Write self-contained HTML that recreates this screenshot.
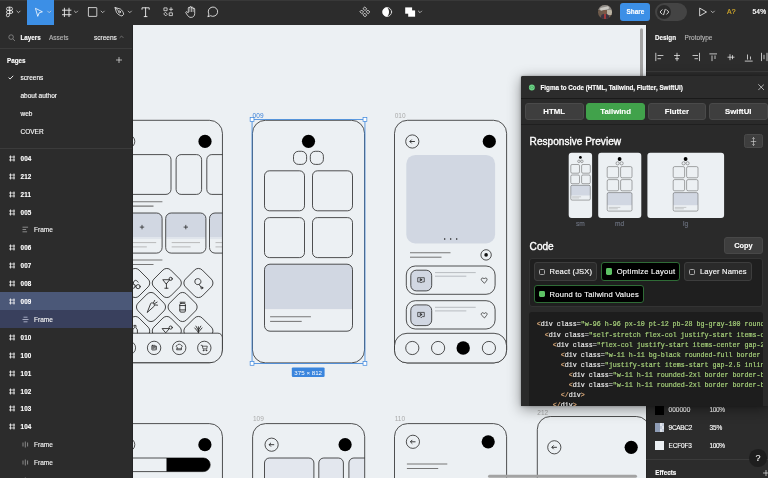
<!DOCTYPE html>
<html><head><meta charset="utf-8"><title>Figma</title>
<style>
*{box-sizing:border-box;margin:0;padding:0}
html,body{width:768px;height:478px;overflow:hidden;background:#ecf0f3;font-family:"Liberation Sans",sans-serif;}
.abs{position:absolute}
#canvas{position:absolute;left:0;top:0;width:768px;height:478px;background:#ecf0f3;overflow:hidden}
#toolbar{position:absolute;left:0;top:0;width:768px;height:25px;background:#2c2c2c}
#left{position:absolute;left:0;top:25px;width:133px;height:453px;background:#2c2c2c;color:#fff;font-size:6.5px;overflow:hidden}
#right{position:absolute;left:646px;top:25px;width:122px;height:453px;background:#2c2c2c;color:#fff;font-size:6.5px;overflow:hidden}
#plugin{position:absolute;left:521px;top:76px;width:247px;height:330px;background:#2a2a2a;color:#fff;overflow:hidden;box-shadow:0 3px 14px rgba(0,0,0,.42), 0 0 3px rgba(0,0,0,.3);border-top-left-radius:2px}
.t{position:absolute;white-space:nowrap;line-height:1;margin-top:0.5px;-webkit-text-stroke:0.12px currentColor}
.b{font-weight:bold}
#root{position:absolute;left:0;top:0;width:768px;height:478px;overflow:hidden;will-change:transform}
</style></head><body>
<div id="root">
<div id="canvas">
<svg class="abs" style="left:0;top:0" width="768" height="478" viewBox="0 0 768 478" fill="none">
<clipPath id="c008"><rect x="110.35" y="120.3" width="112.1" height="242.6" rx="13"/></clipPath>
<g clip-path="url(#c008)">
<circle cx="128.20" cy="141.40" r="6.6" fill="none" stroke="#262626" stroke-width="0.8"/>
<path d="M130.80 141.40H125.80M127.60 139.50L125.70 141.40L127.60 143.30" stroke="#262626" stroke-width="0.9" fill="none"/>
<circle cx="205.00" cy="141.40" r="6.6" fill="#000" stroke="none" stroke-width="0.8"/>
<rect x="121.80" y="154.60" width="49.20" height="39.80" rx="5" fill="none" stroke="#262626" stroke-width="0.8" />
<rect x="176.10" y="154.60" width="25.50" height="39.80" rx="5" fill="none" stroke="#262626" stroke-width="0.8" />
<rect x="206.80" y="154.60" width="49.20" height="39.80" rx="5" fill="none" stroke="#262626" stroke-width="0.8" />
<path d="M121.70 201.70H162.40" stroke="#777" stroke-width="1.05" fill="none"/>
<path d="M121.70 206.10H153.50" stroke="#777" stroke-width="1.05" fill="none"/>
<clipPath id="ca0"><rect x="121.9" y="213" width="40.2" height="40.1" rx="5.5"/></clipPath>
<rect x="121.9" y="213" width="40.2" height="24.3" fill="#d1d7e2" stroke="none" clip-path="url(#ca0)"/>
<rect x="121.9" y="237.3" width="40.2" height="1.6" fill="#dfe4eb" stroke="none" clip-path="url(#ca0)"/>
<rect x="121.90" y="213.00" width="40.20" height="40.10" rx="5.5" fill="none" stroke="#262626" stroke-width="0.8" />
<path d="M139.80 227.1h4.4M142.00 224.9v4.4" stroke="#222" stroke-width="0.75" fill="none"/>
<path d="M127.90 242.60H156.20" stroke="#a9a9a9" stroke-width="0.8" fill="none"/>
<path d="M127.90 246.90H146.80" stroke="#a9a9a9" stroke-width="0.8" fill="none"/>
<clipPath id="ca1"><rect x="165.7" y="213" width="40.2" height="40.1" rx="5.5"/></clipPath>
<rect x="165.7" y="213" width="40.2" height="24.3" fill="#d1d7e2" stroke="none" clip-path="url(#ca1)"/>
<rect x="165.7" y="237.3" width="40.2" height="1.6" fill="#dfe4eb" stroke="none" clip-path="url(#ca1)"/>
<rect x="165.70" y="213.00" width="40.20" height="40.10" rx="5.5" fill="none" stroke="#262626" stroke-width="0.8" />
<path d="M183.60 227.1h4.4M185.80 224.9v4.4" stroke="#222" stroke-width="0.75" fill="none"/>
<path d="M171.70 242.60H200.00" stroke="#a9a9a9" stroke-width="0.8" fill="none"/>
<path d="M171.70 246.90H190.60" stroke="#a9a9a9" stroke-width="0.8" fill="none"/>
<clipPath id="ca2"><rect x="209.5" y="213" width="40.2" height="40.1" rx="5.5"/></clipPath>
<rect x="209.5" y="213" width="40.2" height="24.3" fill="#d1d7e2" stroke="none" clip-path="url(#ca2)"/>
<rect x="209.5" y="237.3" width="40.2" height="1.6" fill="#dfe4eb" stroke="none" clip-path="url(#ca2)"/>
<rect x="209.50" y="213.00" width="40.20" height="40.10" rx="5.5" fill="none" stroke="#262626" stroke-width="0.8" />
<path d="M227.40 227.1h4.4M229.60 224.9v4.4" stroke="#222" stroke-width="0.75" fill="none"/>
<path d="M215.50 242.60H243.80" stroke="#a9a9a9" stroke-width="0.8" fill="none"/>
<path d="M215.50 246.90H234.40" stroke="#a9a9a9" stroke-width="0.8" fill="none"/>
<path d="M121.70 260.00H162.40" stroke="#777" stroke-width="1.05" fill="none"/>
<path d="M121.70 264.40H153.50" stroke="#777" stroke-width="1.05" fill="none"/>
<rect x="123.30" y="271.10" width="23.8" height="23.8" rx="5.5" fill="none" stroke="#262626" stroke-width="0.8" transform="rotate(45 135.20 283.00)"/>
<rect x="123.30" y="319.10" width="23.8" height="23.8" rx="5.5" fill="none" stroke="#262626" stroke-width="0.8" transform="rotate(45 135.20 331.00)"/>
<rect x="154.90" y="271.10" width="23.8" height="23.8" rx="5.5" fill="none" stroke="#262626" stroke-width="0.8" transform="rotate(45 166.80 283.00)"/>
<rect x="154.90" y="319.10" width="23.8" height="23.8" rx="5.5" fill="none" stroke="#262626" stroke-width="0.8" transform="rotate(45 166.80 331.00)"/>
<rect x="186.50" y="271.10" width="23.8" height="23.8" rx="5.5" fill="none" stroke="#262626" stroke-width="0.8" transform="rotate(45 198.40 283.00)"/>
<rect x="186.50" y="319.10" width="23.8" height="23.8" rx="5.5" fill="none" stroke="#262626" stroke-width="0.8" transform="rotate(45 198.40 331.00)"/>
<rect x="139.10" y="295.10" width="23.8" height="23.8" rx="5.5" fill="none" stroke="#262626" stroke-width="0.8" transform="rotate(45 151.00 307.00)"/>
<rect x="170.70" y="295.10" width="23.8" height="23.8" rx="5.5" fill="none" stroke="#262626" stroke-width="0.8" transform="rotate(45 182.60 307.00)"/>
<g stroke="#222" stroke-width="0.7" fill="none" stroke-linecap="round" stroke-linejoin="round" transform="translate(135.2 283) scale(1.22) translate(-135.2 -283)"><circle cx="133.6" cy="285.6" r="1.7"/><circle cx="137.6" cy="286" r="1.7"/><path d="M133.6 283.900c0-3 2-4.500 4-1.600"/></g>
<g stroke="#222" stroke-width="0.7" fill="none" stroke-linecap="round" stroke-linejoin="round" transform="translate(166.8 283) scale(1.22) translate(-166.8 -283)"><path d="M163.800 280.300h5.400l-2.700 3.300zM166.500 283.600v3.600M165.200 287.300h2.600"/><circle cx="170" cy="279.600" r="1.300"/></g>
<g stroke="#222" stroke-width="0.7" fill="none" stroke-linecap="round" stroke-linejoin="round" transform="translate(198.4 283) scale(1.22) translate(-198.4 -283)"><path d="M196 280.200c1.400-1.400 3.600-1 4.300.8.600 1.500-.2 2.800-1.500 3.100l1.900 2.400"/><path d="M196 280.200c-1 1.300-.6 3.100.7 3.800 1 .5 1.700.3 2.100.1"/><circle cx="201.200" cy="287" r="0.800"/></g>
<g stroke="#222" stroke-width="0.7" fill="none" stroke-linecap="round" stroke-linejoin="round" transform="translate(151 307) scale(1.22) translate(-151 -307)"><path d="M148 311.200l2.800-7.200c1.200-1 3.200.1 3 1.900z"/><path d="M153 303.600l1-2M153.800 304.300l2.200-1.300M154.200 305.300l2.200.2"/></g>
<g stroke="#222" stroke-width="0.7" fill="none" stroke-linecap="round" stroke-linejoin="round" transform="translate(182.6 307) scale(1.22) translate(-182.6 -307)"><rect x="180.300" y="304" width="4.600" height="7.200" rx="1"/><path d="M180.600 303.100h4M180.300 305.800h4.600M180.300 309.400h4.600"/></g>
<g stroke="#222" stroke-width="0.7" fill="none" stroke-linecap="round" stroke-linejoin="round" transform="translate(135.2 331) scale(1.22) translate(-135.2 -331)"><path d="M134.400 326.400h1.400v2l1.200 1.600v4h-3.800v-4l1.200-1.600z"/></g>
<g stroke="#222" stroke-width="0.7" fill="none" stroke-linecap="round" stroke-linejoin="round" transform="translate(166.8 331) scale(1.22) translate(-166.8 -331)"><path d="M163.300 329h5.600l-2.800 3.300z"/><circle cx="170" cy="328.200" r="1.300"/></g>
<g stroke="#222" stroke-width="0.7" fill="none" stroke-linecap="round" stroke-linejoin="round" transform="translate(198.4 331) scale(1.22) translate(-198.4 -331)"><path d="M198.400 333v-5.500M198.400 332l-3-3.500M198.400 332l3-3.500M198.400 330.500l-2-3.500M198.400 330.500l2-3.500"/></g>
<path d="M110.35 333.200H217.95a4.500 4.500 0 0 1 4.500 4.500V362.9H110.35z" fill="#ecf0f3" stroke="#262626" stroke-width="0.8"/>
<circle cx="128.90" cy="347.90" r="6.7" fill="none" stroke="#262626" stroke-width="0.8"/>
<circle cx="154.10" cy="347.90" r="6.7" fill="none" stroke="#262626" stroke-width="0.8"/>
<circle cx="179.20" cy="347.90" r="6.7" fill="none" stroke="#262626" stroke-width="0.8"/>
<circle cx="204.30" cy="347.90" r="6.7" fill="none" stroke="#262626" stroke-width="0.8"/>
<g stroke="#222" stroke-width="0.7" fill="none" stroke-linecap="round" stroke-linejoin="round" stroke-width="0.55"><rect x="151.800" y="345.400" width="3.400" height="4.600" rx="0.500"/><path d="M152.600 346.600h1.800M152.600 347.700h1.800M152.600 348.800h1.200M155.200 346.200h1.300v3.200c0 .4-.3.600-.7.600"/></g>
<g stroke="#222" stroke-width="0.7" fill="none" stroke-linecap="round" stroke-linejoin="round" stroke-width="0.55"><path d="M177 347.300c-1.300-.300-1.200-2.100.3-2 .4-1.500 3.400-1.500 3.800 0 1.500-.1 1.600 1.700.3 2v2.500h-4.400z"/><path d="M177 348.800h4.400"/></g>
<g stroke="#222" stroke-width="0.7" fill="none" stroke-linecap="round" stroke-linejoin="round" stroke-width="0.55"><path d="M201.200 345.300h1l.8 3.600h3.700l.6-2.700h-4.700"/><circle cx="203.500" cy="350.300" r="0.500"/><circle cx="206.300" cy="350.300" r="0.500"/></g>
</g>
<rect x="110.35" y="120.30" width="112.10" height="242.60" rx="13" fill="none" stroke="#262626" stroke-width="0.8" />
<text x="252.4" y="117.9" font-family="Liberation Sans, sans-serif" font-size="6.5" letter-spacing="0.2" fill="#3b80d8" stroke="none">009</text>
<rect x="252.45" y="120.30" width="112.10" height="242.60" rx="13" fill="none" stroke="#262626" stroke-width="0.8" />
<circle cx="308.50" cy="141.30" r="6.6" fill="#000" stroke="none" stroke-width="0.8"/>
<rect x="293.50" y="151.30" width="13.10" height="13.10" rx="5.0" fill="none" stroke="#262626" stroke-width="0.8" />
<rect x="310.30" y="151.30" width="13.10" height="13.10" rx="5.0" fill="none" stroke="#262626" stroke-width="0.8" />
<rect x="264.50" y="170.80" width="40.00" height="40.00" rx="5" fill="none" stroke="#262626" stroke-width="0.8" />
<rect x="312.50" y="170.80" width="40.00" height="40.00" rx="5" fill="none" stroke="#262626" stroke-width="0.8" />
<rect x="264.50" y="217.60" width="40.00" height="40.00" rx="5" fill="none" stroke="#262626" stroke-width="0.8" />
<rect x="312.50" y="217.60" width="40.00" height="40.00" rx="5" fill="none" stroke="#262626" stroke-width="0.8" />
<clipPath id="c9"><rect x="264.5" y="264.2" width="88" height="67" rx="5.5"/></clipPath>
<rect x="264.500" y="264.200" width="88" height="44.900" fill="#d1d7e2" stroke="none" clip-path="url(#c9)"/>
<rect x="264.50" y="264.20" width="88.00" height="67.00" rx="5.5" fill="none" stroke="#262626" stroke-width="0.8" />
<path d="M270.10 316.70H310.90" stroke="#777" stroke-width="1.05" fill="none"/>
<path d="M270.10 321.40H301.70" stroke="#777" stroke-width="1.05" fill="none"/>
<rect x="252.05" y="119.5" width="112.9" height="243.9" fill="none" stroke="#3a85dd" stroke-width="0.8"/>
<rect x="250.15" y="117.60" width="3.800" height="3.800" fill="#fff" stroke="#3a85dd" stroke-width="0.7"/>
<rect x="363.05" y="117.60" width="3.800" height="3.800" fill="#fff" stroke="#3a85dd" stroke-width="0.7"/>
<rect x="250.15" y="361.50" width="3.800" height="3.800" fill="#fff" stroke="#3a85dd" stroke-width="0.7"/>
<rect x="363.05" y="361.50" width="3.800" height="3.800" fill="#fff" stroke="#3a85dd" stroke-width="0.7"/>
<rect x="291.800" y="367.400" width="32.800" height="9.600" rx="1.200" fill="#3a85dd" stroke="none"/>
<text x="308.200" y="374.500" text-anchor="middle" font-family="Liberation Sans, sans-serif" font-size="6.200" fill="#fff" stroke="none">375 × 812</text>
<text x="394.7" y="118.0" font-family="Liberation Sans, sans-serif" font-size="6.5" letter-spacing="0" fill="#aaaaaa" stroke="none">010</text>
<rect x="394.50" y="120.30" width="112.10" height="242.60" rx="13" fill="none" stroke="#262626" stroke-width="0.8" />
<circle cx="412.30" cy="141.50" r="6.6" fill="none" stroke="#262626" stroke-width="0.8"/>
<path d="M414.90 141.50H409.90M411.70 139.60L409.80 141.50L411.70 143.40" stroke="#262626" stroke-width="0.9" fill="none"/>
<circle cx="489.30" cy="141.40" r="6.6" fill="#000" stroke="none" stroke-width="0.8"/>
<rect x="406.30" y="154.90" width="88.80" height="88.50" rx="9" fill="#d1d7e2" stroke="none" stroke-width="0.8" />
<circle cx="444.70" cy="239.10" r="0.75" fill="#111" stroke="none" stroke-width="0.8"/>
<circle cx="450.70" cy="239.10" r="0.75" fill="#111" stroke="none" stroke-width="0.8"/>
<circle cx="456.70" cy="239.10" r="0.75" fill="#111" stroke="none" stroke-width="0.8"/>
<path d="M410.00 252.70H450.50" stroke="#777" stroke-width="1.05" fill="none"/>
<path d="M410.00 257.20H441.50" stroke="#777" stroke-width="1.05" fill="none"/>
<circle cx="486.10" cy="254.90" r="5.2" fill="none" stroke="#262626" stroke-width="0.8"/>
<circle cx="486.10" cy="254.90" r="1.8" fill="#111" stroke="none" stroke-width="0.8"/>
<rect x="406.30" y="266.00" width="88.80" height="28.30" rx="9" fill="none" stroke="#262626" stroke-width="0.8" />
<rect x="410.80" y="270.20" width="20.90" height="20.70" rx="5.5" fill="#d1d7e2" stroke="#262626" stroke-width="0.8" />
<g stroke="#222" stroke-width="0.7" fill="none" stroke-linecap="round" stroke-linejoin="round" stroke-width="0.55"><path d="M418.09999999999997 277.7h6.200v4.200h-2l-1.100 1.100-1.100-1.100h-2z"/><path d="M420.5 278.8l1.700 1-1.700 1z" fill="#222"/></g>
<path d="M435.00 272.60H475.70" stroke="#a9adb3" stroke-width="0.8" fill="none"/>
<path d="M435.00 276.20H466.30" stroke="#a9adb3" stroke-width="0.8" fill="none"/>
<path d="M484.2 283.0l-2.500-2.400c-1-1 -.3-2.600 1-2.600 .7 0 1.200 .4 1.500 1 .3-.6 .8-1 1.500-1 1.300 0 2 1.600 1 2.600z" stroke="#222" stroke-width="0.7" fill="none" stroke-linecap="round" stroke-linejoin="round" stroke-width="0.600"/>
<rect x="406.30" y="300.70" width="88.80" height="28.30" rx="9" fill="none" stroke="#262626" stroke-width="0.8" />
<rect x="410.80" y="304.90" width="20.90" height="20.70" rx="5.5" fill="#d1d7e2" stroke="#262626" stroke-width="0.8" />
<g stroke="#222" stroke-width="0.7" fill="none" stroke-linecap="round" stroke-linejoin="round" stroke-width="0.55"><path d="M418.09999999999997 312.4h6.200v4.200h-2l-1.100 1.100-1.100-1.100h-2z"/><path d="M420.5 313.5l1.700 1-1.700 1z" fill="#222"/></g>
<path d="M435.00 307.30H475.70" stroke="#a9adb3" stroke-width="0.8" fill="none"/>
<path d="M435.00 310.90H466.30" stroke="#a9adb3" stroke-width="0.8" fill="none"/>
<path d="M484.2 317.7l-2.500-2.400c-1-1 -.3-2.600 1-2.600 .7 0 1.200 .4 1.500 1 .3-.6 .8-1 1.500-1 1.300 0 2 1.600 1 2.600z" stroke="#222" stroke-width="0.7" fill="none" stroke-linecap="round" stroke-linejoin="round" stroke-width="0.600"/>
<rect x="394.50" y="333.30" width="112.10" height="29.60" rx="12.5" fill="#ecf0f3" stroke="#262626" stroke-width="0.8" />
<circle cx="412.30" cy="348.00" r="6.6" fill="none" stroke="#262626" stroke-width="0.8"/>
<circle cx="438.10" cy="348.00" r="6.6" fill="none" stroke="#262626" stroke-width="0.8"/>
<circle cx="463.20" cy="348.00" r="6.7" fill="#000" stroke="none" stroke-width="0.8"/>
<circle cx="488.90" cy="348.00" r="6.6" fill="none" stroke="#262626" stroke-width="0.8"/>
<clipPath id="cb1"><rect x="110.35" y="423.6" width="112.1" height="242.6" rx="13"/></clipPath>
<g clip-path="url(#cb1)">
<circle cx="128.20" cy="444.70" r="6.6" fill="none" stroke="#262626" stroke-width="0.8"/>
<path d="M130.80 444.70H125.80M127.60 442.80L125.70 444.70L127.60 446.60" stroke="#262626" stroke-width="0.9" fill="none"/>
<circle cx="204.90" cy="444.70" r="6.6" fill="#000" stroke="none" stroke-width="0.8"/>
<rect x="121.70" y="458.00" width="88.50" height="13.60" rx="6.8" fill="none" stroke="#262626" stroke-width="0.8" />
<path d="M166.500 458h36.900a6.800 6.800 0 0 1 0 13.600h-36.900z" fill="#000" stroke="none"/>
</g>
<rect x="110.35" y="423.60" width="112.10" height="242.60" rx="13" fill="none" stroke="#262626" stroke-width="0.8" />
<text x="253" y="421.2" font-family="Liberation Sans, sans-serif" font-size="6.5" letter-spacing="0" fill="#aaaaaa" stroke="none">109</text>
<clipPath id="cb2"><rect x="252.6" y="423.6" width="112.1" height="242.6" rx="13"/></clipPath>
<g clip-path="url(#cb2)">
<circle cx="271.60" cy="444.70" r="6.6" fill="none" stroke="#262626" stroke-width="0.8"/>
<path d="M274.20 444.70H269.20M271.00 442.80L269.10 444.70L271.00 446.60" stroke="#262626" stroke-width="0.9" fill="none"/>
<circle cx="345.10" cy="444.70" r="6.6" fill="#000" stroke="none" stroke-width="0.8"/>
<rect x="264.50" y="458.00" width="49.40" height="40.00" rx="5" fill="#e3e7ee" stroke="#262626" stroke-width="0.8" />
<rect x="318.80" y="458.00" width="24.60" height="40.00" rx="5" fill="#e3e7ee" stroke="#262626" stroke-width="0.8" />
<rect x="348.90" y="458.00" width="49.40" height="40.00" rx="5" fill="#e3e7ee" stroke="#262626" stroke-width="0.8" />
</g>
<rect x="252.60" y="423.60" width="112.10" height="242.60" rx="13" fill="none" stroke="#262626" stroke-width="0.8" />
<text x="394.7" y="421.2" font-family="Liberation Sans, sans-serif" font-size="6.5" letter-spacing="0" fill="#aaaaaa" stroke="none">110</text>
<rect x="394.50" y="423.60" width="112.10" height="242.60" rx="13" fill="none" stroke="#262626" stroke-width="0.8" />
<circle cx="412.90" cy="441.80" r="6.6" fill="none" stroke="#262626" stroke-width="0.8"/>
<path d="M415.50 441.80H410.50M412.30 439.90L410.40 441.80L412.30 443.70" stroke="#262626" stroke-width="0.9" fill="none"/>
<circle cx="488.20" cy="441.80" r="6.6" fill="#000" stroke="none" stroke-width="0.8"/>
<path d="M406.90 463.90H447.30" stroke="#777" stroke-width="1.05" fill="none"/>
<path d="M406.90 468.50H438.20" stroke="#777" stroke-width="1.05" fill="none"/>
<text x="537.3" y="415.0" font-family="Liberation Sans, sans-serif" font-size="6.5" letter-spacing="0" fill="#aaaaaa" stroke="none">212</text>
<rect x="537.30" y="416.50" width="112.10" height="242.60" rx="13" fill="none" stroke="#262626" stroke-width="0.8" />
<circle cx="554.30" cy="447.30" r="6.6" fill="none" stroke="#262626" stroke-width="0.8"/>
<path d="M556.90 447.30H551.90M553.70 445.40L551.80 447.30L553.70 449.20" stroke="#262626" stroke-width="0.9" fill="none"/>
<circle cx="631.20" cy="447.30" r="6.6" fill="#000" stroke="none" stroke-width="0.8"/>
<rect x="640" y="28.300" width="3" height="200" rx="1.500" fill="#a3a3a3" stroke="none"/>
<rect x="488" y="474.800" width="149" height="3" rx="1.500" fill="#a3a3a3" stroke="none"/>
</svg>
</div>
<div id="toolbar">
<div class="abs" style="left:0;top:0;width:768px;height:1px;background:#383838"></div>
<div class="abs" style="left:27px;top:0;width:27px;height:25px;background:#3c8fe6"></div>
<svg class="abs" style="left:0;top:0" width="768" height="25" viewBox="0 0 768 25" fill="none" stroke="#f0f0f0" stroke-width="0.8" stroke-linecap="round" stroke-linejoin="round">
<!-- figma logo -->
<g stroke-width="0.75">
<path d="M9.5 7.2H8.1a1.6 1.6 0 0 0 0 3.2h1.4zM9.5 7.2h1.4a1.6 1.6 0 0 1 0 3.2H9.5z"/>
<path d="M9.5 10.4H8.1a1.6 1.6 0 0 0 0 3.2h1.4z"/>
<circle cx="11" cy="12" r="1.6"/>
<path d="M9.5 13.6H8.1a1.6 1.6 0 1 0 1.4 1.6z"/>
</g>
<g stroke="#d8d8d8" stroke-width="0.75">
<path d="M16.9 11.1l1.6 1.6 1.6-1.6"/>
<path d="M47.6 11.1l1.6 1.6 1.6-1.6"/>
<path d="M74.4 11.1l1.6 1.6 1.6-1.6"/>
<path d="M101.1 11.1l1.6 1.6 1.6-1.6"/>
<path d="M128.2 11.1l1.6 1.6 1.6-1.6"/>
<path d="M418.4 11.1l1.6 1.6 1.6-1.6"/>
<path d="M711.2 11.1l1.6 1.6 1.6-1.6"/>
</g>
<!-- move -->
<path d="M35.8 8.5l6.6 3.3-3.2 1-1.3 3.2z" stroke="#fff"/>
<!-- frame -->
<path d="M64.4 8.2v8.4M69 8.2v8.4M62.4 10.2h8.6M62.4 14.7h8.6" stroke-width="0.9"/>
<!-- rect -->
<rect x="88.4" y="7.6" width="8.4" height="8.8" rx="0.4"/>
<!-- pen -->
<path d="M115.3 7.6l5.2 1.5c1.6 1.2 2.8 3 3.2 5.2l-1.7 1.7c-2.2-.4-4-1.600-5.200-3.200z"/>
<path d="M115.3 7.600l3.500 3.600"/>
<circle cx="119.500" cy="11.900" r="1"/>
<!-- T -->
<path d="M142 9.300V7.800h7.200v1.500M145.600 7.800v8.800M144.200 16.600h2.800" stroke-width="0.9"/>
<!-- resources -->
<g stroke-width="0.75">
<rect x="164.300" y="7.900" width="2.800" height="2.800"/>
<path d="M171 7.600v3.400M169.300 9.300h3.400"/>
<path d="M165.700 12.500l1.700 1.700-1.700 1.700-1.700-1.700z"/>
<rect x="169.600" y="12.800" width="2.800" height="2.800"/>
</g>
<!-- hand -->
<path d="M188.300 12.300V8.100a.8.800 0 0 1 1.600 0V7.300a.8.800 0 0 1 1.600 0v.7a.8.800 0 0 1 1.600 0v1a.8.800 0 0 1 1.600 0v4.600c0 2.200-1.400 3.800-3.600 3.800-1.600 0-2.600-.6-3.600-2.100l-1.700-2.600c-.4-.7.500-1.500 1.200-.8z"/>
<path d="M189.900 8v3.600M191.500 8v3.600M193.100 9v2.600" stroke-width="0.6"/>
<!-- comment -->
<path d="M208 16.400l.9-2.300a4.700 4.700 0 1 1 1.900 1.800z" stroke-width="0.85"/>
<!-- component -->
<g stroke-width="0.75" stroke="#fff">
<path d="M365 7.200l1.700 1.700-1.700 1.700-1.700-1.700z"/>
<path d="M365 13.400l1.700 1.700-1.700 1.700-1.700-1.700z"/>
<path d="M361.900 10.300l1.700 1.700-1.700 1.700-1.700-1.700z"/>
<path d="M368.100 10.300l1.700 1.700-1.700 1.700-1.700-1.700z"/>
</g>
<!-- mask -->
<circle cx="387.100" cy="12" r="4.500" stroke-width="0.800"/>
<path d="M387.100 7.500a4.500 4.500 0 0 0 0 9c1.500-1.200 1.900-3 1.900-4.500s-.4-3.300-1.900-4.500z" fill="#fff" stroke="none"/>
<!-- boolean -->
<rect x="405.200" y="7.400" width="6.900" height="6.300" fill="#fff" stroke="none"/>
<rect x="408.200" y="10.400" width="6.900" height="6.300" fill="#fff" stroke="none"/>
<!-- play -->
<path d="M700 8.300l6.500 3.700-6.500 3.700z" stroke-width="0.85"/>
</svg>
<!-- avatar -->
<div class="abs" style="left:598.200px;top:5.300px;width:13.600px;height:13.600px;border-radius:50%;overflow:hidden;background:#6d5a4b">
<div class="abs" style="left:0;top:0;width:14px;height:5px;background:#8d8a86"></div>
<div class="abs" style="left:2px;top:1.500px;width:9px;height:3px;background:#c9c7c2;border-radius:2px;transform:rotate(-12deg)"></div>
<div class="abs" style="left:9px;top:5px;width:5px;height:5px;background:#b9b2a2"></div>
<div class="abs" style="left:4.500px;top:4.500px;width:4.500px;height:4.500px;border-radius:50%;background:#7a5a48"></div>
<div class="abs" style="left:2.500px;top:9px;width:8.500px;height:6px;border-radius:3px 3px 0 0;background:#3b3442"></div>
<div class="abs" style="left:5.800px;top:9px;width:1.600px;height:5px;background:#a23a3a"></div>
</div>
<!-- share -->
<div class="abs" style="left:620px;top:3px;width:30.200px;height:18.200px;border-radius:3px;background:#3c8fe6"></div>
<span class="t b" style="left:626.600px;top:8.800px;font-size:6.400px;color:#fff">Share</span>
<!-- dev toggle -->
<div class="abs" style="left:654.800px;top:3px;width:31.800px;height:18px;border-radius:9px;background:#444"></div>
<div class="abs" style="left:657px;top:5px;width:14.400px;height:14.400px;border-radius:50%;background:#2a2a2a"></div>
<svg class="abs" style="left:659px;top:8px" width="11" height="8" viewBox="0 0 11 8" fill="none" stroke="#fff" stroke-width="0.8" stroke-linecap="round" stroke-linejoin="round"><path d="M3.100 1.800L1 4l2.100 2.200M7.700 1.800L9.800 4 7.700 6.200M6.200 1.300L4.600 6.700"/></svg>
<span class="t" style="left:727px;top:8.600px;font-size:6.800px;color:#d0a72a;-webkit-text-stroke:0.200px #d0a72a;letter-spacing:0.300px">A?</span>
<span class="t" style="left:752.600px;top:8.800px;font-size:6.600px;color:#fff;-webkit-text-stroke:0.200px #fff;letter-spacing:0.100px">54%</span>
</div>

<div id="left">
<svg class="abs" style="left:8px;top:8.5px" width="8" height="8" viewBox="0 0 8 8" fill="none" stroke="#9a9a9a" stroke-width="0.7"><circle cx="3.1" cy="3.1" r="2.3"/><path d="M4.8 4.8L7 7"/></svg>
<span class="t b" style="left:20.5px;top:9px;font-size:6.3px;color:#fff">Layers</span>
<span class="t" style="left:49px;top:9px;font-size:6.5px;color:#b8b8b8">Assets</span>
<span class="t" style="left:94px;top:9px;font-size:6.5px;color:#f0f0f0">screens</span>
<svg class="abs" style="left:119px;top:10px" width="5" height="4" viewBox="0 0 5 4" fill="none" stroke="#8a8a8a" stroke-width="0.7"><path d="M0.6 2.9L2.5 1L4.4 2.9"/></svg>
<div class="abs" style="left:0;top:23px;width:133px;height:1px;background:#3b3b3b"></div>
<span class="t b" style="left:7px;top:32px;font-size:6.3px">Pages</span>
<svg class="abs" style="left:116px;top:32px" width="6" height="6" viewBox="0 0 6 6" fill="none" stroke="#e8e8e8" stroke-width="0.7"><path d="M3 0v6M0 3h6"/></svg>
<svg class="abs" style="left:8px;top:50px" width="6" height="5" viewBox="0 0 6 5" fill="none" stroke="#fff" stroke-width="0.9"><path d="M0.6 2.6L2.1 4L5.2 0.8"/></svg>
<span class="t" style="left:20.5px;top:49.5px;font-size:6.5px">screens</span>
<span class="t" style="left:20.5px;top:67.5px;font-size:6.5px">about author</span>
<span class="t" style="left:20.5px;top:85.4px;font-size:6.5px">web</span>
<span class="t" style="left:20.5px;top:103.4px;font-size:6.5px">COVER</span>
<div class="abs" style="left:0;top:123px;width:133px;height:1px;background:#3b3b3b"></div>
<div class="abs" style="left:0;top:267.3px;width:133px;height:17.8px;background:#4b5878"></div>
<div class="abs" style="left:0;top:285.1px;width:133px;height:17.9px;background:#39405d"></div>
<svg class="abs" style="left:8.6px;top:130.0px" width="6.6" height="7" viewBox="0 0 6.6 7" fill="none" stroke="#f6f6f6" stroke-width="0.8"><path d="M1.5 0.5v6M5 0.5v6M0.1 2h6.3M0.1 5h6.3"/></svg>
<span class="t b" style="left:20.5px;top:130.7px;font-size:6.3px;letter-spacing:0.15px">004</span>
<svg class="abs" style="left:8.6px;top:148.0px" width="6.6" height="7" viewBox="0 0 6.6 7" fill="none" stroke="#f6f6f6" stroke-width="0.8"><path d="M1.5 0.5v6M5 0.5v6M0.1 2h6.3M0.1 5h6.3"/></svg>
<span class="t b" style="left:20.5px;top:148.7px;font-size:6.3px;letter-spacing:0.15px">212</span>
<svg class="abs" style="left:8.6px;top:166.0px" width="6.6" height="7" viewBox="0 0 6.6 7" fill="none" stroke="#f6f6f6" stroke-width="0.8"><path d="M1.5 0.5v6M5 0.5v6M0.1 2h6.3M0.1 5h6.3"/></svg>
<span class="t b" style="left:20.5px;top:166.7px;font-size:6.3px;letter-spacing:0.15px">211</span>
<svg class="abs" style="left:8.6px;top:184.0px" width="6.6" height="7" viewBox="0 0 6.6 7" fill="none" stroke="#f6f6f6" stroke-width="0.8"><path d="M1.5 0.5v6M5 0.5v6M0.1 2h6.3M0.1 5h6.3"/></svg>
<span class="t b" style="left:20.5px;top:184.7px;font-size:6.3px;letter-spacing:0.15px">005</span>
<svg class="abs" style="left:22px;top:201.0px" width="7" height="7" viewBox="0 0 7 7" fill="none" stroke="#a8a8a8" stroke-width="0.75"><path d="M0.5 1.2h5.6M0.5 3.5h3.6M0.5 5.8h4.6"/></svg>
<span class="t" style="left:34px;top:201.7px;font-size:6.5px;color:#f4f4f4">Frame</span>
<svg class="abs" style="left:8.6px;top:219.0px" width="6.6" height="7" viewBox="0 0 6.6 7" fill="none" stroke="#f6f6f6" stroke-width="0.8"><path d="M1.5 0.5v6M5 0.5v6M0.1 2h6.3M0.1 5h6.3"/></svg>
<span class="t b" style="left:20.5px;top:219.7px;font-size:6.3px;letter-spacing:0.15px">006</span>
<svg class="abs" style="left:8.6px;top:237.0px" width="6.6" height="7" viewBox="0 0 6.6 7" fill="none" stroke="#f6f6f6" stroke-width="0.8"><path d="M1.5 0.5v6M5 0.5v6M0.1 2h6.3M0.1 5h6.3"/></svg>
<span class="t b" style="left:20.5px;top:237.7px;font-size:6.3px;letter-spacing:0.15px">007</span>
<svg class="abs" style="left:8.6px;top:255.0px" width="6.6" height="7" viewBox="0 0 6.6 7" fill="none" stroke="#f6f6f6" stroke-width="0.8"><path d="M1.5 0.5v6M5 0.5v6M0.1 2h6.3M0.1 5h6.3"/></svg>
<span class="t b" style="left:20.5px;top:255.7px;font-size:6.3px;letter-spacing:0.15px">008</span>
<svg class="abs" style="left:8.6px;top:273.0px" width="6.6" height="7" viewBox="0 0 6.6 7" fill="none" stroke="#f6f6f6" stroke-width="0.8"><path d="M1.5 0.5v6M5 0.5v6M0.1 2h6.3M0.1 5h6.3"/></svg>
<span class="t b" style="left:20.5px;top:273.7px;font-size:6.3px;letter-spacing:0.15px">009</span>
<svg class="abs" style="left:22px;top:291.0px" width="7" height="7" viewBox="0 0 7 7" fill="none" stroke="#c8cce0" stroke-width="0.75"><path d="M1.5 1.2h4M0.5 3.5h6M1.5 5.8h4"/></svg>
<span class="t" style="left:34px;top:291.7px;font-size:6.5px;color:#f4f4f4">Frame</span>
<svg class="abs" style="left:8.6px;top:309.0px" width="6.6" height="7" viewBox="0 0 6.6 7" fill="none" stroke="#f6f6f6" stroke-width="0.8"><path d="M1.5 0.5v6M5 0.5v6M0.1 2h6.3M0.1 5h6.3"/></svg>
<span class="t b" style="left:20.5px;top:309.7px;font-size:6.3px;letter-spacing:0.15px">010</span>
<svg class="abs" style="left:8.6px;top:327.0px" width="6.6" height="7" viewBox="0 0 6.6 7" fill="none" stroke="#f6f6f6" stroke-width="0.8"><path d="M1.5 0.5v6M5 0.5v6M0.1 2h6.3M0.1 5h6.3"/></svg>
<span class="t b" style="left:20.5px;top:327.7px;font-size:6.3px;letter-spacing:0.15px">100</span>
<svg class="abs" style="left:8.6px;top:345.0px" width="6.6" height="7" viewBox="0 0 6.6 7" fill="none" stroke="#f6f6f6" stroke-width="0.8"><path d="M1.5 0.5v6M5 0.5v6M0.1 2h6.3M0.1 5h6.3"/></svg>
<span class="t b" style="left:20.5px;top:345.7px;font-size:6.3px;letter-spacing:0.15px">101</span>
<svg class="abs" style="left:8.6px;top:363.0px" width="6.6" height="7" viewBox="0 0 6.6 7" fill="none" stroke="#f6f6f6" stroke-width="0.8"><path d="M1.5 0.5v6M5 0.5v6M0.1 2h6.3M0.1 5h6.3"/></svg>
<span class="t b" style="left:20.5px;top:363.7px;font-size:6.3px;letter-spacing:0.15px">102</span>
<svg class="abs" style="left:8.6px;top:380.0px" width="6.6" height="7" viewBox="0 0 6.6 7" fill="none" stroke="#f6f6f6" stroke-width="0.8"><path d="M1.5 0.5v6M5 0.5v6M0.1 2h6.3M0.1 5h6.3"/></svg>
<span class="t b" style="left:20.5px;top:380.7px;font-size:6.3px;letter-spacing:0.15px">103</span>
<svg class="abs" style="left:8.6px;top:398.0px" width="6.6" height="7" viewBox="0 0 6.6 7" fill="none" stroke="#f6f6f6" stroke-width="0.8"><path d="M1.5 0.5v6M5 0.5v6M0.1 2h6.3M0.1 5h6.3"/></svg>
<span class="t b" style="left:20.5px;top:398.7px;font-size:6.3px;letter-spacing:0.15px">104</span>
<svg class="abs" style="left:22px;top:416.0px" width="7" height="7" viewBox="0 0 7 7" fill="none" stroke="#a8a8a8" stroke-width="0.75"><path d="M1 1.5v4M3.3 0.5v6M5.6 1.5v4"/></svg>
<span class="t" style="left:34px;top:416.7px;font-size:6.5px;color:#f4f4f4">Frame</span>
<svg class="abs" style="left:22px;top:434.0px" width="7" height="7" viewBox="0 0 7 7" fill="none" stroke="#a8a8a8" stroke-width="0.75"><path d="M1 1.5v4M3.3 0.5v6M5.6 1.5v4"/></svg>
<span class="t" style="left:34px;top:434.7px;font-size:6.5px;color:#f4f4f4">Frame</span>
<svg class="abs" style="left:22px;top:452.0px" width="7" height="7" viewBox="0 0 7 7" fill="none" stroke="#a8a8a8" stroke-width="0.75"><path d="M1 1.5v4M3.3 0.5v6M5.6 1.5v4"/></svg>
<span class="t" style="left:34px;top:452.7px;font-size:6.5px;color:#f4f4f4">Frame</span>
<div class="abs" style="left:132px;top:0;width:1px;height:453px;background:#242424"></div>
</div>

<div id="right">
<div class="abs" style="left:0;top:0;width:1px;height:453px;background:#262626"></div>
<span class="t b" style="left:9.0px;top:9.300px;font-size:6.300px">Design</span>
<span class="t" style="left:38.6px;top:9.300px;font-size:6.500px;color:#b8b8b8">Prototype</span>
<svg class="abs" style="left:0;top:25px" width="122" height="14" viewBox="0 0 122 14" fill="none" stroke="#e8e8e8" stroke-width="0.8">
<path d="M9.800 2.800v8.300M11.500 5.500h5.900M11.500 8.700h3.500"/>
<path d="M31 2.800v8.300M28 5.500h6M29 8.700h4"/>
<path d="M53.500 2.800v8.300M46.500 5.500h5.500M48.500 8.700h3.500"/>
<path d="M63.400 3.900h7.600M66 5.500v5.600M69 5.500v3.500"/>
<path d="M81.500 7.200h7M84 4.200v6M86.500 5.200v4"/>
<path d="M98.800 11.100h7.900M101.500 4.500v5M104.500 6.500v3"/>
<path d="M115.500 2.800v8.300M118 4.800v4.400M121 2.800v8.300"/>
</svg>
<div class="abs" style="left:0;top:45.500px;width:122px;height:1px;background:#3b3b3b"></div>
<!-- fills -->
<div class="abs" style="left:9.3px;top:380.800px;width:8.800px;height:8.800px;background:#000"></div>
<span class="t" style="left:22.6px;top:381.800px;font-size:6.500px">000000</span>
<span class="t" style="left:63.4px;top:381.800px;font-size:6.500px;letter-spacing:-0.3px">100%</span>
<div class="abs" style="left:9.3px;top:398px;width:4.400px;height:8.800px;background:#8f9db6"></div>
<div class="abs" style="left:13.7px;top:398px;width:4.400px;height:8.800px;background:#c3cad8"></div>
<div class="abs" style="left:13.7px;top:398px;width:2.200px;height:2.900px;background:#dfe3ea"></div>
<div class="abs" style="left:15.9px;top:400.900px;width:2.200px;height:2.900px;background:#dfe3ea"></div>
<div class="abs" style="left:13.7px;top:403.800px;width:2.200px;height:3px;background:#dfe3ea"></div>
<span class="t" style="left:22.6px;top:399.700px;font-size:6.500px;letter-spacing:-0.3px">9CABC2</span>
<span class="t" style="left:63.4px;top:399.700px;font-size:6.500px;letter-spacing:-0.1px">35%</span>
<div class="abs" style="left:9.3px;top:416.200px;width:8.800px;height:8.800px;background:#ecf0f3"></div>
<span class="t" style="left:22.6px;top:417.600px;font-size:6.500px;letter-spacing:-0.2px">ECF0F3</span>
<span class="t" style="left:63.4px;top:417.600px;font-size:6.500px;letter-spacing:-0.3px">100%</span>
<div class="abs" style="left:0;top:434px;width:122px;height:1px;background:#3b3b3b"></div>
<div class="abs" style="left:103.0px;top:424.200px;width:17.600px;height:17.600px;border-radius:50%;background:#1e1e1e"></div>
<span class="t" style="left:109.4px;top:428.600px;font-size:9px;color:#f0f0f0">?</span>
<span class="t b" style="left:9.3px;top:444.600px;font-size:6.300px">Effects</span>
<svg class="abs" style="left:116.5px;top:444.500px" width="6" height="6" viewBox="0 0 6 6" fill="none" stroke="#e8e8e8" stroke-width="0.700"><path d="M3 0v6M0 3h6"/></svg>
</div>

<div id="plugin">
<div class="abs" style="left:0;top:0;width:247px;height:22px;background:#2c2c2c"></div>
<div class="abs" style="left:0;top:21.700px;width:247px;height:1px;background:#1a1a1a"></div>
<svg class="abs" style="left:6px;top:6px" width="10" height="10" viewBox="0 0 10 10" fill="none"><circle cx="4.850" cy="5.450" r="2.950" fill="#6ad184"/><path d="M4.200 4.300L3.100 5.450l1.100 1.150M5.500 4.300l1.100 1.150-1.100 1.150" stroke="#2f7a42" stroke-width="0.550"/></svg>
<span class="t b" style="left:19.500px;top:8.300px;font-size:6.280px;color:#fff">Figma to Code (HTML, Tailwind, Flutter, SwiftUI)</span>
<svg class="abs" style="left:236.800px;top:8.400px" width="6.400" height="6.400" viewBox="0 0 6.400 6.400" fill="none" stroke="#e8e8e8" stroke-width="0.700"><path d="M0.300 0.300l5.800 5.800M6.100 0.300L0.300 6.100"/></svg>
<div class="abs" style="left:3.8px;top:27.100px;width:58.800px;height:16.800px;border-radius:3px;background:#3e3e3e;border:0.500px solid #4a4a4a"></div>
<span class="t b" style="left:3.8px;width:58.800px;text-align:center;top:31.600px;font-size:7.800px;color:#fff">HTML</span>
<div class="abs" style="left:65.2px;top:27.100px;width:58.800px;height:16.800px;border-radius:3px;background:#41a24b;border:0.500px solid #41a24b"></div>
<span class="t b" style="left:65.2px;width:58.800px;text-align:center;top:31.600px;font-size:7.800px;color:#fff">Tailwind</span>
<div class="abs" style="left:126.5px;top:27.100px;width:58.800px;height:16.800px;border-radius:3px;background:#3e3e3e;border:0.500px solid #4a4a4a"></div>
<span class="t b" style="left:126.5px;width:58.800px;text-align:center;top:31.600px;font-size:7.800px;color:#fff">Flutter</span>
<div class="abs" style="left:187.9px;top:27.100px;width:58.800px;height:16.800px;border-radius:3px;background:#3e3e3e;border:0.500px solid #4a4a4a"></div>
<span class="t b" style="left:187.9px;width:58.800px;text-align:center;top:31.600px;font-size:7.800px;color:#fff">SwiftUI</span>
<div class="abs" style="left:0;top:47.500px;width:247px;height:1px;background:#1f1f1f"></div>
<span class="t" style="left:8.600px;top:60px;font-size:10.100px;color:#fff;-webkit-text-stroke:0.350px #fff">Responsive Preview</span>
<div class="abs" style="left:223.400px;top:57.700px;width:18.400px;height:14.600px;border-radius:2.500px;background:#3e3e3e;border:0.500px solid #4a4a4a"></div>
<svg class="abs" style="left:229px;top:60.500px" width="7" height="9" viewBox="0 0 7 9" fill="none" stroke="#d8d8d8" stroke-width="0.600"><path d="M3.500 0.500v8M0.800 4.500h5.400M2.300 1.800l1.200-1.300 1.200 1.300M2.300 7.200l1.200 1.300 1.200-1.300"/></svg>
<svg class="abs" style="left:0;top:0" width="247" height="160" viewBox="521 76 247 160" fill="none">
<rect x="568.7" y="152.700" width="23.4" height="65.400" rx="3" fill="#ecf0f3"/>
<circle cx="580.4" cy="157.400" r="1.400" fill="#000"/>
<circle cx="578.9" cy="161.300" r="1.250" stroke="#555" stroke-width="0.500" fill="none"/><circle cx="581.9" cy="161.300" r="1.250" stroke="#555" stroke-width="0.500" fill="none"/>
<rect x="570.8" y="164.5" width="8.700" height="8.700" rx="1.300" stroke="#555" stroke-width="0.500" fill="none"/><rect x="581.6" y="164.5" width="8.700" height="8.700" rx="1.300" stroke="#555" stroke-width="0.500" fill="none"/>
<rect x="570.8" y="175" width="8.700" height="8.700" rx="1.300" stroke="#555" stroke-width="0.500" fill="none"/><rect x="581.6" y="175" width="8.700" height="8.700" rx="1.300" stroke="#555" stroke-width="0.500" fill="none"/>
<rect x="570.8" y="185.300" width="19.500" height="10.100" rx="1" fill="#d1d7e2"/>
<rect x="570.8" y="185.300" width="19.500" height="14.800" rx="1.300" stroke="#555" stroke-width="0.500" fill="none"/>
<path d="M572.1 196.800h9M572.1 198h7" stroke="#999" stroke-width="0.400"/>
<rect x="598.2" y="152.700" width="43.1" height="65.400" rx="3" fill="#ecf0f3"/>
<circle cx="619.6" cy="159" r="1.900" fill="#000"/>
<circle cx="617.6" cy="163.300" r="1.600" stroke="#555" stroke-width="0.500" fill="none"/><circle cx="621.6" cy="163.300" r="1.600" stroke="#555" stroke-width="0.500" fill="none"/>
<rect x="607.2" y="166.6" width="11.400" height="11.200" rx="1.500" stroke="#555" stroke-width="0.500" fill="none"/><rect x="620.6" y="166.6" width="11.400" height="11.200" rx="1.500" stroke="#555" stroke-width="0.500" fill="none"/>
<rect x="607.2" y="179.6" width="11.400" height="11.200" rx="1.500" stroke="#555" stroke-width="0.500" fill="none"/><rect x="620.6" y="179.6" width="11.400" height="11.200" rx="1.500" stroke="#555" stroke-width="0.500" fill="none"/>
<rect x="607.2" y="192.600" width="24.800" height="12.600" rx="1" fill="#d1d7e2"/>
<rect x="607.2" y="192.600" width="24.800" height="18.500" rx="1.500" stroke="#555" stroke-width="0.500" fill="none"/>
<path d="M608.8 207.400h11.500M608.8 208.800h9" stroke="#999" stroke-width="0.450"/>
<rect x="647.4" y="152.700" width="76.7" height="65.400" rx="3" fill="#ecf0f3"/>
<circle cx="685.6" cy="159" r="1.900" fill="#000"/>
<circle cx="683.6" cy="163.300" r="1.600" stroke="#555" stroke-width="0.500" fill="none"/><circle cx="687.6" cy="163.300" r="1.600" stroke="#555" stroke-width="0.500" fill="none"/>
<rect x="673.2" y="166.6" width="11.400" height="11.200" rx="1.500" stroke="#555" stroke-width="0.500" fill="none"/><rect x="686.6" y="166.6" width="11.400" height="11.200" rx="1.500" stroke="#555" stroke-width="0.500" fill="none"/>
<rect x="673.2" y="179.6" width="11.400" height="11.200" rx="1.500" stroke="#555" stroke-width="0.500" fill="none"/><rect x="686.6" y="179.6" width="11.400" height="11.200" rx="1.500" stroke="#555" stroke-width="0.500" fill="none"/>
<rect x="673.2" y="192.600" width="24.800" height="12.600" rx="1" fill="#d1d7e2"/>
<rect x="673.2" y="192.600" width="24.800" height="18.500" rx="1.500" stroke="#555" stroke-width="0.500" fill="none"/>
<path d="M674.8 207.400h11.500M674.8 208.800h9" stroke="#999" stroke-width="0.450"/>
</svg>
<span class="t" style="left:49.4px;width:20px;text-align:center;top:144.600px;font-size:6.600px;color:#6d7380">sm</span>
<span class="t" style="left:88.5px;width:20px;text-align:center;top:144.600px;font-size:6.600px;color:#6d7380">md</span>
<span class="t" style="left:154.6px;width:20px;text-align:center;top:144.600px;font-size:6.600px;color:#6d7380">lg</span>
<span class="t" style="left:8.600px;top:165.100px;font-size:10.100px;color:#fff;-webkit-text-stroke:0.350px #fff">Code</span>
<div class="abs" style="left:203px;top:161.100px;width:38.800px;height:16.500px;border-radius:3px;background:#3e3e3e;border:0.500px solid #484848"></div>
<span class="t b" style="left:203px;width:38.800px;text-align:center;top:165.600px;font-size:7.400px;color:#fff">Copy</span>
<div class="abs" style="left:8px;top:182.400px;width:233.800px;height:49.100px;border-radius:3px;background:#1f1f1f;border:0.500px solid #333"></div>
<div class="abs" style="left:12.6px;top:186.3px;width:63.9px;height:18.500px;border-radius:3px;background:#2a2a2a;border:0.600px solid #3d3d3d"></div>
<div class="abs" style="left:17.9px;top:192.5px;width:6.200px;height:6.200px;border-radius:1.500px;border:0.700px solid #a8a8a8;background:#2a2a2a"></div>
<span class="t" style="left:28.6px;top:191.8px;font-size:7.6px;letter-spacing:0.152px;color:#fff;-webkit-text-stroke:0.120px #fff">React (JSX)</span>
<div class="abs" style="left:79.7px;top:186.3px;width:79.8px;height:18.500px;border-radius:3px;background:#000;border:0.600px solid #2f6b36"></div>
<div class="abs" style="left:84.9px;top:192.4px;width:6.400px;height:6.400px;border-radius:1.400px;background:#5dc264"></div>
<span class="t" style="left:95.7px;top:191.8px;font-size:7.6px;letter-spacing:0.255px;color:#fff;-webkit-text-stroke:0.120px #fff">Optimize Layout</span>
<div class="abs" style="left:163px;top:186.3px;width:67.8px;height:18.500px;border-radius:3px;background:#2a2a2a;border:0.600px solid #3d3d3d"></div>
<div class="abs" style="left:168.3px;top:192.5px;width:6.200px;height:6.200px;border-radius:1.500px;border:0.700px solid #a8a8a8;background:#2a2a2a"></div>
<span class="t" style="left:179.0px;top:191.8px;font-size:7.6px;letter-spacing:0.149px;color:#fff;-webkit-text-stroke:0.120px #fff">Layer Names</span>
<div class="abs" style="left:12.6px;top:208.9px;width:110.7px;height:18.500px;border-radius:3px;background:#000;border:0.600px solid #2f6b36"></div>
<div class="abs" style="left:17.8px;top:215.0px;width:6.400px;height:6.400px;border-radius:1.400px;background:#5dc264"></div>
<span class="t" style="left:28.6px;top:214.4px;font-size:7.6px;letter-spacing:0.201px;color:#fff;-webkit-text-stroke:0.120px #fff">Round to Tailwind Values</span>
<div class="abs" style="left:8px;top:236.100px;width:233.800px;height:100px;border-radius:3px 3px 0 0;background:#1d1d1d;overflow:hidden;font-family:'Liberation Mono',monospace;font-size:6.670px;color:#e6e6e6">
<span class="t" style="left:7.8px;top:8.90px;-webkit-text-stroke:0.200px currentColor"><span style="color:#d8a878">&lt;</span>div class=<span style="color:#a5cf7a">"w-96 h-96 px-10 pt-12 pb-28 bg-gray-100 rounded-[40px] border"</span><span style="color:#d8a878">&gt;</span></span>
<span class="t" style="left:15.8px;top:18.95px;-webkit-text-stroke:0.200px currentColor"><span style="color:#d8a878">&lt;</span>div class=<span style="color:#a5cf7a">"self-stretch flex-col justify-start items-center gap-5 flex"</span><span style="color:#d8a878">&gt;</span></span>
<span class="t" style="left:23.8px;top:29.00px;-webkit-text-stroke:0.200px currentColor"><span style="color:#d8a878">&lt;</span>div class=<span style="color:#a5cf7a">"flex-col justify-start items-center gap-2.5 flex"</span><span style="color:#d8a878">&gt;</span></span>
<span class="t" style="left:31.8px;top:39.05px;-webkit-text-stroke:0.200px currentColor"><span style="color:#d8a878">&lt;</span>div class=<span style="color:#a5cf7a">"w-11 h-11 bg-black rounded-full border border-black"</span><span style="color:#d8a878">&gt;</span></span>
<span class="t" style="left:31.8px;top:49.10px;-webkit-text-stroke:0.200px currentColor"><span style="color:#d8a878">&lt;</span>div class=<span style="color:#a5cf7a">"justify-start items-start gap-2.5 inline-flex"</span><span style="color:#d8a878">&gt;</span></span>
<span class="t" style="left:39.8px;top:59.15px;-webkit-text-stroke:0.200px currentColor"><span style="color:#d8a878">&lt;</span>div class=<span style="color:#a5cf7a">"w-11 h-11 rounded-2xl border border-black"</span><span style="color:#d8a878">&gt;</span></span>
<span class="t" style="left:39.8px;top:69.20px;-webkit-text-stroke:0.200px currentColor"><span style="color:#d8a878">&lt;</span>div class=<span style="color:#a5cf7a">"w-11 h-11 rounded-2xl border border-black"</span><span style="color:#d8a878">&gt;</span></span>
<span class="t" style="left:31.8px;top:79.25px;-webkit-text-stroke:0.200px currentColor"><span style="color:#d8a878">&lt;/</span>div<span style="color:#d8a878">&gt;</span></span>
<span class="t" style="left:23.8px;top:89.30px;-webkit-text-stroke:0.200px currentColor"><span style="color:#d8a878">&lt;/</span>div<span style="color:#d8a878">&gt;</span></span>
</div>
</div>
</div>
</body></html>
